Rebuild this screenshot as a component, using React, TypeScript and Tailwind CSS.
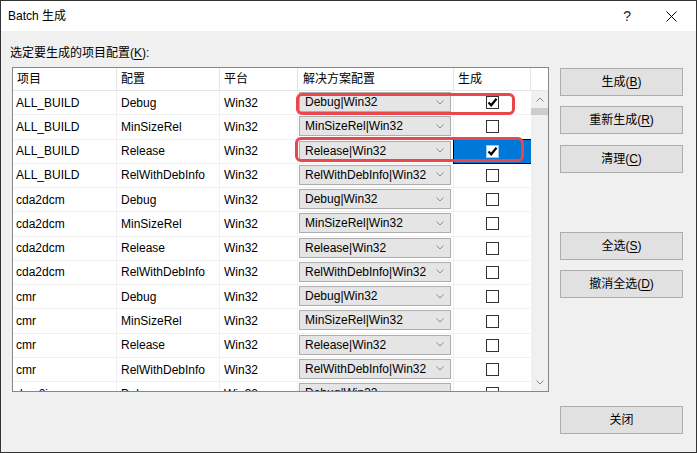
import React from "react";

const font = "font-['Liberation_Sans','Noto_Sans_CJK_SC',sans-serif]";

const configs = ["Debug", "MinSizeRel", "Release", "RelWithDebInfo"];
const projects = ["ALL_BUILD", "cda2dcm", "cmr"];

const rows = [
  ...projects.flatMap((p) => configs.map((c) => ({ project: p, config: c }))),
  { project: "dcm2json", config: "Debug" },
];

const Chevron = ({ up = false, className = "" }: { up?: boolean; className?: string }) => (
  <svg width="8" height="5" viewBox="0 0 8 5" className={className}>
    <path
      d={up ? "M0.5 4.5 L4 1 L7.5 4.5" : "M0.5 0.5 L4 4 L7.5 0.5"}
      fill="none"
      stroke="#8a8a8a"
      strokeWidth="1"
    />
  </svg>
);

const CheckBox = ({ checked, selected }: { checked: boolean; selected?: boolean }) => (
  <div
    className={`w-[13px] h-[13px] bg-white border flex items-center justify-center ${
      selected ? "border-[#9ccaf0]" : "border-[#333333]"
    }`}
  >
    {checked && (
      <svg width="11" height="11" viewBox="0 0 11 11">
        <path d="M1.5 5.5 L4.2 8.3 L9.5 1.8" fill="none" stroke="#000" strokeWidth="2.2" />
      </svg>
    )}
  </div>
);

const Button = ({ label, k, className = "" }: { label: string; k: string; className?: string }) => (
  <div
    className={`w-[123px] h-[28px] bg-[#e1e1e1] border border-[#adadad] flex items-center justify-center text-[12px] text-black ${className}`}
  >
    {label}(<span className="underline underline-offset-2">{k}</span>)
  </div>
);

const App = () => {
  return (
    <div className={`w-[697px] h-[453px] border border-[#333333] bg-[#f0f0f0] flex flex-col ${font}`}>
      {/* title bar */}
      <div className="h-[30px] bg-white flex items-center pl-[7px] text-[12px] text-black shrink-0">
        <span>Batch 生成</span>
        <span className="ml-auto text-[14px] font-normal text-[#222] mr-[35px]">?</span>
        <svg width="11" height="11" viewBox="0 0 11 11" className="mr-[19px]">
          <path d="M0.5 0.5 L10.5 10.5 M10.5 0.5 L0.5 10.5" stroke="#000" strokeWidth="1" />
        </svg>
      </div>

      <div className="flex">
        {/* left side */}
        <div className="pl-[11px] flex flex-col">
          <div className="-ml-[2px] mt-[14px] mb-[6px] h-[16px] leading-[16px] text-[12px] text-black">
            选定要生成的项目配置(<span className="underline underline-offset-2">K</span>):
          </div>

          <div className="relative w-[537px] h-[325px] border border-[#828790] bg-white overflow-hidden text-[12px] text-black">
            {/* header */}
            <div className="flex h-[23px] border-b border-[#e5e5e5]">
              <div className="w-[104px] border-r border-[#e5e5e5] pl-[4px] flex items-center">项目</div>
              <div className="w-[103px] border-r border-[#e5e5e5] pl-[4px] flex items-center">配置</div>
              <div className="w-[78px] border-r border-[#e5e5e5] pl-[4px] flex items-center">平台</div>
              <div className="w-[156px] border-r border-[#e5e5e5] pl-[5px] flex items-center">解决方案配置</div>
              <div className="w-[77px] border-r border-[#e5e5e5] pl-[4px] flex items-center">生成</div>
              <div className="w-[17px]" />
            </div>

            <div className="flex">
              <div className="w-[518px] h-[300px] overflow-hidden">
                {rows.map((r, i) => {
                  const checked = i === 0 || i === 2;
                  const selected = i === 2;
                  return (
                    <div key={i} className="flex h-[24.27px] border-b border-[#f0f0f0]">
                      <div className="w-[104px] shrink-0 border-r border-[#f0f0f0] pl-[3px] flex items-center">
                        {r.project}
                      </div>
                      <div className="w-[103px] shrink-0 border-r border-[#f0f0f0] pl-[4px] flex items-center">
                        {r.config}
                      </div>
                      <div className="w-[78px] shrink-0 border-r border-[#f0f0f0] pl-[4px] flex items-center">
                        Win32
                      </div>
                      <div className="w-[156px] shrink-0 border-r border-[#f0f0f0] pt-[1px] pl-[1px]">
                        <div className="w-[152px] h-[20px] bg-[#e5e5e5] border border-[#adadad] flex items-center">
                          <span className="ml-[5px] w-[121px] overflow-hidden whitespace-nowrap">
                            {r.config}|Win32
                          </span>
                          <Chevron className="ml-[10px]" />
                        </div>
                      </div>
                      <div
                        className={`w-[77px] shrink-0 flex items-center justify-center ${
                          selected ? "bg-[#0078d7] outline outline-1 outline-black" : ""
                        }`}
                      >
                        <CheckBox checked={checked} selected={selected} />
                      </div>
                    </div>
                  );
                })}
              </div>

              {/* scrollbar */}
              <div className="w-[17px] h-[300px] bg-[#f0f0f0] flex flex-col items-center">
                <div className="h-[17px] flex items-center justify-center">
                  <Chevron up />
                </div>
                <div className="w-full h-[7px] bg-[#cdcdcd]" />
                <div className="mt-auto h-[17px] flex items-center justify-center">
                  <Chevron />
                </div>
              </div>
            </div>

            {/* highlight marks */}
            <div className="absolute left-[283px] top-[25px] w-[219px] h-[22px] border-[3px] border-[#e9474c] rounded-[6px]" />
            <div className="absolute left-[282px] top-[69px] w-[229px] h-[25px] border-[3px] border-[#e9474c] rounded-[6px]" />
          </div>
        </div>

        {/* right buttons */}
        <div className="ml-[11px] flex flex-col">
          <Button label="生成" k="B" className="mt-[37px]" />
          <Button label="重新生成" k="R" className="mt-[10px]" />
          <Button label="清理" k="C" className="mt-[11px]" />
          <Button label="全选" k="S" className="mt-[59px]" />
          <Button label="撤消全选" k="D" className="mt-[10px]" />
          <div className="mt-[108px] w-[123px] h-[28px] bg-[#e1e1e1] border border-[#adadad] flex items-center justify-center text-[12px] text-black">
            关闭
          </div>
        </div>
      </div>
    </div>
  );
};

export default App;
